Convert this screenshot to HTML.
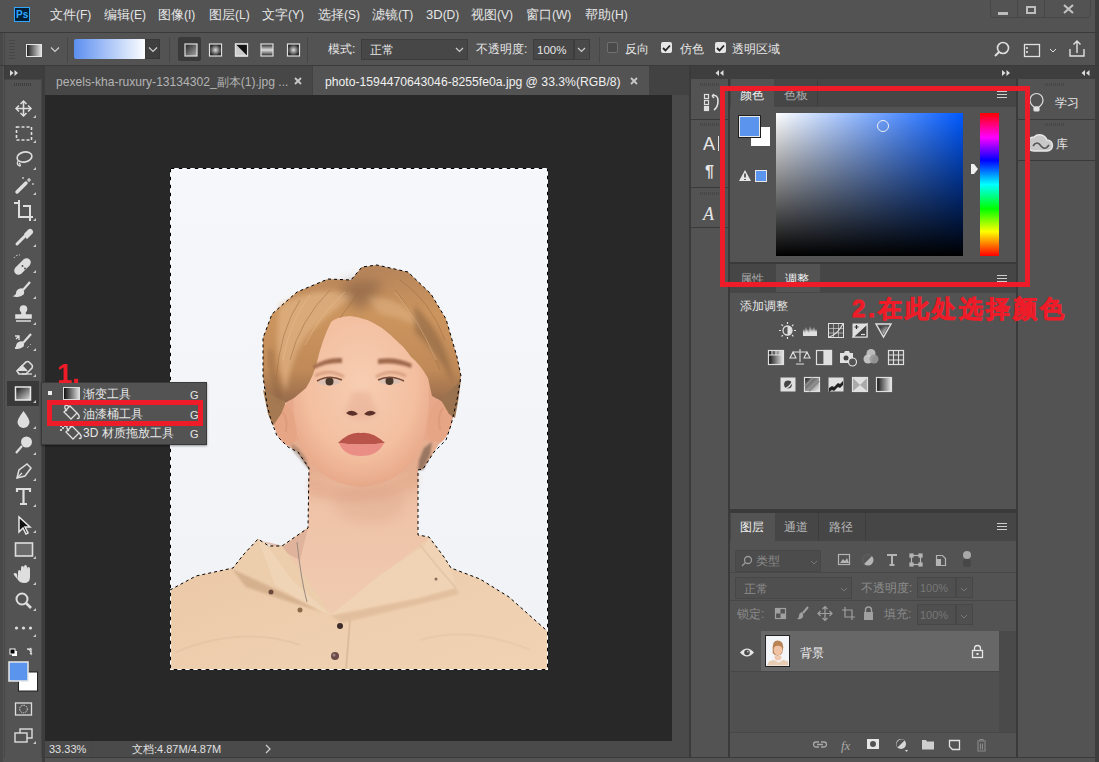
<!DOCTYPE html>
<html><head><meta charset="utf-8">
<style>
*{margin:0;padding:0;box-sizing:border-box}
html,body{width:1099px;height:762px;overflow:hidden;background:#535353;font-family:"Liberation Sans",sans-serif;color:#e6e6e6}
.a{position:absolute}
.t{position:absolute;white-space:nowrap;font-size:13px;line-height:16px}
.s{position:absolute;white-space:nowrap;font-size:12px;line-height:14px}
svg{position:absolute;overflow:visible}
</style></head><body>
<!-- ================= FRAME ================= -->
<div class="a" style="left:0;top:32px;width:3px;height:730px;background:#484848"></div><div class="a" style="left:4px;top:66px;width:1px;height:692px;background:#3a3a3a"></div>
<div class="a" style="left:1095px;top:0;width:4px;height:762px;background:#3d3d3d"></div>
<!-- menu bar -->
<div class="a" style="left:0;top:32px;width:1099px;height:1px;background:#3a3a3a"></div>
<div class="a" style="left:14px;top:7px;width:16px;height:15px;background:#001e36;border:1px solid #31a8ff"></div>
<div class="t" style="left:16px;top:7px;font-size:10px;line-height:15px;color:#31a8ff;font-weight:bold">Ps</div>
<div class="t" style="left:50px;top:7px">文件<span style="font-size:12px">(F)</span></div>
<div class="t" style="left:104px;top:7px">编辑<span style="font-size:12px">(E)</span></div>
<div class="t" style="left:158px;top:7px">图像<span style="font-size:12px">(I)</span></div>
<div class="t" style="left:209px;top:7px">图层<span style="font-size:12px">(L)</span></div>
<div class="t" style="left:262px;top:7px">文字<span style="font-size:12px">(Y)</span></div>
<div class="t" style="left:318px;top:7px">选择<span style="font-size:12px">(S)</span></div>
<div class="t" style="left:372px;top:7px">滤镜<span style="font-size:12px">(T)</span></div>
<div class="t" style="left:426px;top:7px">3D<span style="font-size:12px">(D)</span></div>
<div class="t" style="left:471px;top:7px">视图<span style="font-size:12px">(V)</span></div>
<div class="t" style="left:526px;top:7px">窗口<span style="font-size:12px">(W)</span></div>
<div class="t" style="left:585px;top:7px">帮助<span style="font-size:12px">(H)</span></div>
<!-- window buttons -->
<div class="a" style="left:990px;top:-1px;width:101px;height:19px;border:1px solid #474747;border-radius:0 0 4px 4px"></div>
<div class="a" style="left:1017px;top:0;width:1px;height:18px;background:#474747"></div>
<div class="a" style="left:1044px;top:0;width:1px;height:18px;background:#474747"></div>
<div class="a" style="left:998px;top:12px;width:10px;height:3px;background:#bdbdbd"></div>
<div class="a" style="left:1026px;top:6px;width:10px;height:8px;border:2px solid #bdbdbd"></div>
<svg style="left:1063px;top:4px" width="11" height="10" viewBox="0 0 11 10" stroke="#c4c4c4" stroke-width="2"><path d="M1,1 l9,8 M10,1 l-9,8"/></svg>

<!-- ================= OPTIONS BAR ================= -->
<div class="a" style="left:4px;top:33px;width:1091px;height:32px;border-left:1px solid #474747"></div>
<div class="a" style="left:0;top:65px;width:1099px;height:1px;background:#3a3a3a"></div>

<!-- ================= PANEL HEADER ROW ================= -->
<div class="a" style="left:5px;top:66px;width:38px;height:13px;background:#3e3e3e"></div><div class="a" style="left:691px;top:66px;width:404px;height:13px;background:#3e3e3e"></div>

<!-- ================= TOOLBAR ================= -->
<div class="a" style="left:4px;top:79px;width:38px;height:679px;background:#535353;border-left:1px solid #474747;border-right:1px solid #474747"></div>
<div class="a" style="left:42px;top:66px;width:3px;height:696px;background:#3d3d3d"></div>

<!-- ================= DOCUMENT ================= -->
<div class="a" style="left:45px;top:66px;width:644px;height:29px;background:#424242"></div>
<div class="a" style="left:45px;top:66px;width:267px;height:29px;background:#474747"></div>
<div class="a" style="left:313px;top:66px;width:336px;height:29px;background:#535353"></div>
<div class="a" style="left:45px;top:95px;width:627px;height:646px;background:#282828"></div>
<div class="a" style="left:672px;top:95px;width:17px;height:646px;background:#4a4a4a"></div>
<div class="a" style="left:45px;top:741px;width:644px;height:16px;background:#4a4a4a"></div>
<div class="a" style="left:45px;top:757px;width:1050px;height:1px;background:#3a3a3a"></div>
<div class="a" style="left:689px;top:66px;width:2px;height:692px;background:#3a3a3a"></div>

<!-- ================= MIDDLE ICON COLUMN ================= -->
<div class="a" style="left:728px;top:79px;width:2px;height:679px;background:#3a3a3a"></div>
<div class="a" style="left:691px;top:119px;width:37px;height:1px;background:#3a3a3a"></div>
<div class="a" style="left:691px;top:187px;width:37px;height:1px;background:#3a3a3a"></div>
<div class="a" style="left:691px;top:227px;width:37px;height:1px;background:#3a3a3a"></div>

<!-- ================= RIGHT PANELS ================= -->
<div class="a" style="left:1016px;top:79px;width:2px;height:679px;background:#3a3a3a"></div>
<div class="a" style="left:1018px;top:119px;width:77px;height:1px;background:#3a3a3a"></div>
<div class="a" style="left:1018px;top:160px;width:77px;height:1px;background:#3a3a3a"></div>

<!-- color panel -->
<div class="a" style="left:730px;top:79px;width:286px;height:28px;background:#464646"></div>
<div class="a" style="left:731px;top:79px;width:43px;height:28px;background:#535353"></div>
<div class="a" style="left:817px;top:79px;width:1px;height:28px;background:#3d3d3d"></div>
<div class="a" style="left:730px;top:262px;width:286px;height:2px;background:#3a3a3a"></div>
<!-- adjustments panel -->
<div class="a" style="left:730px;top:264px;width:286px;height:28px;background:#464646"></div>
<div class="a" style="left:776px;top:264px;width:44px;height:28px;background:#535353"></div>
<div class="a" style="left:730px;top:509px;width:286px;height:4px;background:#3a3a3a"></div>
<!-- layers panel -->
<div class="a" style="left:730px;top:513px;width:286px;height:28px;background:#464646"></div>
<div class="a" style="left:731px;top:513px;width:44px;height:28px;background:#535353"></div>
<div class="a" style="left:818px;top:513px;width:1px;height:28px;background:#3d3d3d"></div>
<div class="a" style="left:865px;top:513px;width:1px;height:28px;background:#3d3d3d"></div>
<div class="a" style="left:730px;top:572px;width:286px;height:1px;background:#474747"></div>
<div class="a" style="left:730px;top:600px;width:286px;height:1px;background:#474747"></div>
<div class="a" style="left:761px;top:631px;width:238px;height:40px;background:#676767"></div>
<div class="a" style="left:731px;top:671px;width:268px;height:61px;background:#505050;border-top:1px solid #474747"></div><div class="a" style="left:999px;top:631px;width:17px;height:101px;background:#4a4a4a"></div>
<div class="a" style="left:730px;top:732px;width:286px;height:1px;background:#474747"></div>

<!-- ================= PHOTO ================= -->
<svg style="left:170px;top:168px" width="378" height="502" viewBox="170 168 378 502">
<defs>
<linearGradient id="bgp" x1="0" y1="0" x2="0" y2="1"><stop offset="0" stop-color="#f6f7fa"/><stop offset="1" stop-color="#f0f2f6"/></linearGradient>
<linearGradient id="shirt" x1="0" y1="0" x2="1" y2="1"><stop offset="0" stop-color="#eac7a5"/><stop offset="0.6" stop-color="#eecfaf"/><stop offset="1" stop-color="#f1d3b4"/></linearGradient>
<linearGradient id="hair" x1="0" y1="0" x2="0" y2="1"><stop offset="0" stop-color="#b5845a"/><stop offset="0.35" stop-color="#cc955f"/><stop offset="0.75" stop-color="#c08a58"/><stop offset="1" stop-color="#93684a"/></linearGradient>
<radialGradient id="face" cx="0.5" cy="0.42" r="0.62"><stop offset="0" stop-color="#f7cdb2"/><stop offset="0.65" stop-color="#f3bfa0"/><stop offset="1" stop-color="#e6a585"/></radialGradient>
<linearGradient id="neck" x1="0" y1="0" x2="0" y2="1"><stop offset="0" stop-color="#e3aa8c"/><stop offset="0.3" stop-color="#efc3a8"/><stop offset="1" stop-color="#f0cbb0"/></linearGradient>
<filter id="bl" x="-30%" y="-30%" width="160%" height="160%"><feGaussianBlur stdDeviation="0.8"/></filter>
<filter id="bl2" x="-30%" y="-30%" width="160%" height="160%"><feGaussianBlur stdDeviation="2.5"/></filter><filter id="bl3" x="-50%" y="-50%" width="200%" height="200%"><feGaussianBlur stdDeviation="6"/></filter>
</defs>
<rect x="170" y="168" width="378" height="502" fill="url(#bgp)"/>
<!-- shirt -->
<path d="M170,590 L196,576 L233,568 L244,554 L258,539 L269,546 L282,546 L307,528 L331,560 L418,535 L429,537 L444,557 L451,568 L480,579 L509,597 L546,630 L548,632 L548,670 L170,670 Z" fill="url(#shirt)"/>
<!-- neck & chest skin -->
<path d="M309,462 L308,528 L284,546 L331,615 L429,538 L418,535 L418,462 Z" fill="url(#neck)"/>

<!-- collar back shadow -->
<path d="M262,541 L284,546 L308,528 L300,560 Z" fill="#dcae98" opacity="0.8"/>
<!-- collar flaps -->
<path d="M258,539 L269,546 L282,546 L300,570 L331,615 L322,612 L290,596 L252,580 L232,569 L244,554 Z" fill="#eccdac"/>
<path d="M258,539 L266,544 L292,580 L331,615 L318,610 L275,585 Z" fill="#f0d4b6"/>
<path d="M429,537 L444,557 L451,568 L456,588 L420,598 L331,615 L380,575 L425,545 Z" fill="#f0d3b4"/>
<path d="M232,569 L290,596 L322,612 L290,602 L246,587 Z" fill="#c49c78" opacity="0.55" filter="url(#bl)"/>
<path d="M331,616 L420,598 L456,588 L459,594 L420,604 L342,623 Z" fill="#d6b090" opacity="0.5" filter="url(#bl)"/>
<path d="M420,545 Q440,570 456,588" stroke="#e2c3a4" stroke-width="2" fill="none" opacity="0.8"/>
<line x1="350" y1="620" x2="346" y2="670" stroke="#ddbd9d" stroke-width="2"/>
<path d="M176,652 Q240,625 300,645" stroke="#e0c1a1" stroke-width="2" fill="none" opacity="0.6"/>
<path d="M420,640 Q470,625 530,650" stroke="#e4c6a7" stroke-width="2" fill="none" opacity="0.5"/>
<!-- buttons -->
<circle cx="340" cy="626" r="3" fill="#3e2c28"/>
<circle cx="335" cy="656" r="4" fill="#6b4c4a"/><circle cx="334" cy="655" r="1.5" fill="#a08080"/>
<circle cx="300" cy="610" r="2.5" fill="#8a6a4a"/>
<circle cx="271" cy="592" r="2.5" fill="#6a4a3a"/>
<circle cx="436" cy="579" r="1.5" fill="#8a6a5a"/>
<!-- necklace -->
<path d="M297,542 Q301,580 307,602" stroke="#9a8a80" stroke-width="1" fill="none"/>
<!-- ears -->
<rect x="286" y="370" width="152" height="74" fill="#e8a98a"/>
<ellipse cx="285" cy="424" rx="11" ry="22" transform="rotate(-14 285 424)" fill="#e6a585"/>
<ellipse cx="440" cy="421" rx="12" ry="24" transform="rotate(14 440 421)" fill="#e6a585"/>
<path d="M282,412 q6,4 4,20" stroke="#d89878" stroke-width="2" fill="none" opacity=".7"/>
<path d="M443,408 q-6,6 -3,22" stroke="#d89878" stroke-width="2" fill="none" opacity=".7"/>
<path d="M296,446 L309,462 L309,470 L300,456 Z" fill="#8a6a55" opacity=".7"/>
<path d="M286,445 L298,452 L309,468 L309,472 L418,472 L418,470 L423,469 L434,452 L440,442 L420,440 L300,440 Z" fill="#e5ae90"/>
<path d="M291,443 L298,448 L306,458 L309,470 L300,459 L293,451 Z" fill="#8a6a58" opacity=".5" filter="url(#bl)"/>
<!-- face -->
<path d="M293,308 L429,308 L429,400 Q428,436 415,458 Q395,485 361,487 Q327,485 307,458 Q294,436 293,400 Z" fill="url(#face)"/>
<path d="M309,478 Q362,500 418,472 L418,486 Q362,512 309,494 Z" fill="#e2a98b" opacity="0.5" filter="url(#bl2)"/><ellipse cx="370" cy="503" rx="36" ry="20" fill="#dba387" opacity="0.35" filter="url(#bl3)"/>
<path d="M424,448 L432,442 L430,455 L423,470 L418,470 L419,460 Z" fill="#7a6050" opacity=".7" filter="url(#bl)"/>
<!-- hair -->
<path d="M283,404 L267,405 L263,376 L263,338 L272,314 L297,292 L328,279 L351,280 L362,267 L377,265 L408,272 L431,294 L446,319 L457,357 L461,376 L457,400 L443,402 L432,396 L428,378 Q420,364 411,357 Q405,348 399,343 Q390,334 382,328 Q365,317 350,316 Q336,317 331,322 Q322,340 317,362 Q313,377 306,388 L294,398 Z" fill="url(#hair)"/>
<path d="M263,390 L286,402 L281,414 L273,426 L268,414 Z" fill="#a57a52"/>
<path d="M461,380 L441,400 L449,414 L455,418 L458,402 Z" fill="#9a7250"/>
<path d="M280,305 Q320,283 355,296 Q330,312 310,332 Q292,352 286,392 Q272,350 280,305 Z" fill="#e0b283" opacity="0.75" filter="url(#bl2)"/>
<path d="M365,296 Q405,296 425,330 Q405,318 380,314 Z" fill="#dcae7e" opacity="0.65" filter="url(#bl2)"/>
<path d="M340,286 Q362,274 384,284 Q374,298 358,312 Z" fill="#7a5740" opacity="0.5" filter="url(#bl3)"/>
<path d="M414,305 Q447,335 454,385 Q437,352 415,332 Z" fill="#86603f" opacity="0.55" filter="url(#bl2)"/>
<path d="M270,350 Q272,380 280,400" stroke="#86603f" stroke-width="5" fill="none" opacity="0.45" filter="url(#bl2)"/>
<g stroke="#9a6a44" stroke-width="1" fill="none" opacity="0.5">
<path d="M300,300 Q280,330 276,380"/><path d="M330,290 Q300,320 290,360"/><path d="M395,290 Q420,320 440,370"/><path d="M360,290 Q350,305 340,318"/><path d="M400,280 Q430,300 445,340"/>
</g>
<g stroke="#e8c092" stroke-width="1" fill="none" opacity="0.5">
<path d="M310,295 Q290,320 283,360"/><path d="M345,292 Q320,315 305,345"/><path d="M395,292 Q418,318 436,360"/>
</g>
<!-- brows -->
<path d="M313,366 Q326,357 342,358 L342,363 Q327,362 314,369 Z" fill="#a06b4e" filter="url(#bl)"/>
<path d="M378,359 Q396,356 412,364 L411,368 Q396,362 378,364 Z" fill="#a06b4e" filter="url(#bl)"/>
<!-- eyes -->
<path d="M315,376 Q329,368 344,377" stroke="#c98a6c" stroke-width="3" fill="none" opacity=".6" filter="url(#bl)"/>
<path d="M376,377 Q391,368 406,376" stroke="#c98a6c" stroke-width="3" fill="none" opacity=".6" filter="url(#bl)"/>
<ellipse cx="329" cy="382" rx="11" ry="3.5" fill="#dcc2b4"/>
<ellipse cx="390" cy="381" rx="11" ry="3.5" fill="#dcc2b4"/>
<circle cx="329.5" cy="381.5" r="4" fill="#4a372c"/>
<circle cx="389.5" cy="381" r="4" fill="#4a372c"/>
<path d="M317,381 Q329,374 342,380" stroke="#7a4a38" stroke-width="1.6" fill="none"/>
<path d="M378,380 Q390,374 404,381" stroke="#7a4a38" stroke-width="1.6" fill="none"/>
<!-- nose -->
<path d="M352,392 Q349,405 344,412 Q350,421 362,420 Q374,421 379,412 Q372,405 370,392" fill="#e7b096" opacity="0.55" filter="url(#bl2)"/>
<path d="M346,413 Q352,408 358,414 Q352,418 346,413z" fill="#5a3028"/>
<path d="M364,414 Q370,408 376,413 Q370,418 364,414z" fill="#5a3028"/>
<!-- lips -->
<path d="M338,443 Q350,431 361,433 Q372,431 385,443 Q362,446 338,443 Z" fill="#b9544a"/>
<path d="M339,443 Q362,446 384,443 Q378,456 361,456 Q344,456 339,443 Z" fill="#ea8e85"/>
<!-- marching ants -->
<rect x="170.5" y="168.5" width="377" height="501" fill="none" stroke="#000" stroke-width="1" stroke-dasharray="4 4"/>
<rect x="170.5" y="168.5" width="377" height="501" fill="none" stroke="#fff" stroke-width="1" stroke-dasharray="4 4" stroke-dashoffset="4"/>
<path d="M170,590 L196,576 L233,568 L244,554 L258,539 L269,546 L282,546 L308,528 L309,468 L298,452 L288,447 L277,436 L271,420 L267,405 L263,376 L263,338 L272,314 L297,292 L328,279 L351,280 L362,267 L377,265 L408,272 L431,294 L446,319 L457,357 L461,376 L457,400 L451,425 L446,440 L434,452 L423,469 L418,470 L418,535 L429,537 L444,557 L451,568 L480,579 L509,597 L546,630" fill="none" stroke="#000" stroke-width="1" stroke-dasharray="3 3"/>
</svg>

<!-- ================= TOOLBAR ICONS ================= -->
<svg style="left:10px;top:70px" width="10" height="6" viewBox="0 0 10 6" fill="#dcdcdc"><path d="M0,0 l3.5,3 l-3.5,3z M4.5,0 l3.5,3 l-3.5,3z"/></svg>
<div class="a" style="left:14px;top:83px;width:18px;height:3px;background:repeating-linear-gradient(90deg,#3e3e3e 0 1px,transparent 1px 2px)"></div>
<div class="a" style="left:7px;top:381px;width:32px;height:25px;background:#393939"></div>
<svg style="left:0;top:0" width="45" height="762" viewBox="0 0 45 762" fill="none" stroke="#dedede" stroke-width="1.6">
<g fill="#c8c8c8" stroke="none">
<path d="M33,118 l3,-3 v3z"/><path d="M33,143 l3,-3 v3z"/><path d="M33,170 l3,-3 v3z"/><path d="M33,195 l3,-3 v3z"/><path d="M33,221 l3,-3 v3z"/><path d="M33,247 l3,-3 v3z"/><path d="M33,273 l3,-3 v3z"/><path d="M33,299 l3,-3 v3z"/><path d="M33,325 l3,-3 v3z"/><path d="M33,351 l3,-3 v3z"/><path d="M33,377 l3,-3 v3z"/><path d="M33,403 l3,-3 v3z"/><path d="M33,429 l3,-3 v3z"/><path d="M33,455 l3,-3 v3z"/><path d="M33,481 l3,-3 v3z"/><path d="M33,507 l3,-3 v3z"/><path d="M33,533 l3,-3 v3z"/><path d="M33,559 l3,-3 v3z"/><path d="M33,585 l3,-3 v3z"/><path d="M33,611 l3,-3 v3z"/><path d="M33,637 l3,-3 v3z"/><path d="M33,744 l3,-3 v3z"/>
</g>
<!-- move -->
<path d="M23.5,101 v15 M16,108.5 h15"/><path d="M20.5,104 l3,-3 l3,3 M20.5,113 l3,3 l3,-3 M19,105.5 l-3,3 l3,3 M28,105.5 l3,3 l-3,3" stroke-width="1.5"/>
<!-- marquee -->
<rect x="16.5" y="127" width="15" height="13" stroke-dasharray="3 2"/>
<!-- lasso -->
<ellipse cx="24.5" cy="157" rx="7.5" ry="5" transform="rotate(-12 24.5 157)"/><path d="M18,161 q-2,4 2,5 q1,-1 -1,-3" stroke-width="1.3"/>
<!-- magic wand -->
<path d="M17,192 l9,-9" stroke-width="3.5" stroke-linecap="round"/><path d="M29,178 v4 M27,180 h4 M23,177 v2 M33,183 v2" stroke-width="1.2"/>
<!-- crop -->
<path d="M14,203 h5 v14 h14 M19,203 v-3 M23,206 h7 v15" stroke-width="2"/>
<!-- eyedropper -->
<path d="M17,244 l9,-9" stroke-width="3" stroke-linecap="round"/><path d="M25,234 l4,-4 q2,-1 3,1 q1,1 -1,3 l-4,4z" fill="#dedede"/>
<!-- healing -->
<path d="M16,268 l8,-8 q3,-2 5,0 q2,2 0,5 l-8,8 q-3,2 -5,0 q-2,-2 0,-5z" fill="#dedede"/><circle cx="22.5" cy="266" r="1" fill="#535353" stroke="none"/><circle cx="25" cy="268.5" r="1" fill="#535353" stroke="none"/><path d="M14,258 a6,6 0 0 1 6,-3" stroke-dasharray="1.5 1.5" stroke-width="1"/>
<!-- brush -->
<path d="M30,282 l-7,8" stroke-width="2.2"/><path d="M22,289 q-4,0 -5,3 q0,3 -2,4 q5,1 8,-2 q1,-3 -1,-5z" fill="#dedede"/>
<!-- stamp -->
<circle cx="23.5" cy="309" r="3" fill="#dedede"/><path d="M22,312 v3 h-6 v3 h15 v-3 h-6 v-3" fill="#dedede"/><path d="M16,321 h15" stroke-width="1.5"/>
<!-- history brush -->
<path d="M31,334 l-8,9" stroke-width="2.2"/><path d="M22,342 q-4,0 -5,3 q0,3 -2,3 q5,1 8,-2 q1,-2 -1,-4z" fill="#dedede"/><path d="M16,339 l3,-3 M15,336 h4 v4" stroke-width="1.3"/><path d="M27,348 l2,-2 M30,345 l1,-1" stroke-width="1" stroke-dasharray="1 1"/>
<!-- eraser -->
<path d="M17,371 l9,-9 q2,-1 3,0 l3,3 q1,1 0,3 l-6,6 h-7z" fill="none"/><path d="M17,371 l5,-5 l5,5" fill="#dedede"/><path d="M22,374 h10" stroke-width="1.3"/>
<!-- gradient selected -->
<defs><linearGradient id="tg" x1="0" y1="0" x2="1" y2="1"><stop offset="0" stop-color="#111"/><stop offset="1" stop-color="#ddd"/></linearGradient></defs>
<rect x="15.5" y="387" width="15" height="13" fill="url(#tg)" stroke="#e8e8e8" stroke-width="1.5"/>
<!-- blur drop -->
<path d="M23.5,411 q-6,8 -6,11 a6,6 0 0 0 12,0 q0,-3 -6,-11z" fill="#dedede" stroke="none"/>
<!-- dodge -->
<circle cx="26.5" cy="442" r="5.5" fill="#dedede" stroke="none"/><path d="M22,446 l-6,7" stroke-width="2.2"/>
<!-- pen -->
<path d="M17,478 l2,-8 l8,-6 l4,4 l-6,8z" fill="none" stroke-width="1.5"/><path d="M17,478 l5,-5" stroke-width="1.2"/>
<!-- type -->
<path d="M17,492 v-3 h13 v3 M23.5,489 v15 M20,504 h7" stroke-width="2.2"/>
<!-- path selection -->
<path d="M19,517 v15 l4,-4 l3,6 l2,-1 l-3,-6 h5z" fill="#111" stroke="#e8e8e8" stroke-width="1.5"/>
<!-- rectangle -->
<rect x="15.5" y="543" width="17" height="13" fill="#6a6a6a" stroke="#dedede" stroke-width="1.6"/>
<!-- hand -->
<path d="M18,580 v-8 q0,-2 1.5,-2 q1.5,0 1.5,2 v-4 q0,-2 1.5,-2 q1.5,0 1.5,2 v-1 q0,-2 1.5,-2 q1.5,0 1.5,2 v2 q0,-2 1.5,-2 q1.5,0 1.5,2 v8 q0,6 -6,6 q-4,0 -6,-3 l-4,-5 q-1,-2 1,-2 q1,0 2,1z" fill="#dedede" stroke="none"/>
<!-- zoom -->
<circle cx="22" cy="599" r="5.5" stroke-width="2"/><path d="M26,603 l5,5" stroke-width="2.6"/>
<!-- more -->
<g fill="#dedede" stroke="none"><circle cx="16.5" cy="628" r="1.6"/><circle cx="23.5" cy="628" r="1.6"/><circle cx="30.5" cy="628" r="1.6"/></g>
<!-- small fg/bg -->
<rect x="12" y="651" width="5" height="5" fill="#fff" stroke="none"/><rect x="10" y="649" width="5" height="5" fill="#000" stroke="#fff" stroke-width="1"/>
<path d="M27,649 h4 l-1,-1 M31,649 v5 l-1,-1 l1,1 l1,-1" stroke-width="1.2"/><path d="M27,649 q3,0 4,3" stroke-width="1.2"/>
<!-- fg/bg big -->
<rect x="18.5" y="672" width="19" height="19" fill="#fff" stroke="#222" stroke-width="1"/>
<rect x="9" y="662" width="19" height="19" fill="#5b94ec" stroke="#e8e8e8" stroke-width="1.5"/>
<!-- quick mask -->
<rect x="15.5" y="703" width="16" height="12" stroke-width="1.3"/><circle cx="23.5" cy="709" r="3.8" stroke-dasharray="1.5 1" stroke-width="1"/>
<!-- screen mode -->
<rect x="20" y="729" width="12" height="9" stroke-width="1.4"/><rect x="15" y="733" width="12" height="9" fill="#535353" stroke-width="1.4"/>
</svg>
<!-- flyout menu -->
<div class="a" style="left:41px;top:382px;width:166px;height:63px;background:#535353;border:1px solid #3a3a3a;box-shadow:0 1px 2px rgba(0,0,0,.4)"></div>
<div class="a" style="left:48px;top:391px;width:4px;height:4px;background:#eee"></div>
<div class="a" style="left:63px;top:387px;width:17px;height:13px;background:linear-gradient(90deg,#111,#ddd);border:1px solid #ddd"></div>
<div class="s" style="left:83px;top:387px;font-size:12px">渐变工具</div>
<div class="s" style="left:190px;top:388px;font-size:11px">G</div>
<svg style="left:60px;top:403px" width="22" height="18" viewBox="0 0 22 18" fill="none" stroke="#e0e0e0" stroke-width="1.3"><path d="M4,9 l6,-6 l7,7 l-6,6z"/><path d="M9,4 q-2,-3 -4,-1 q-1,2 2,5"/><path d="M17,10 q3,3 2,5 q-1,1 -2,0"/></svg>
<div class="s" style="left:83px;top:407px;font-size:12px">油漆桶工具</div>
<div class="s" style="left:190px;top:408px;font-size:11px">G</div>
<svg style="left:60px;top:423px" width="24" height="18" viewBox="0 0 24 18" fill="none" stroke="#e0e0e0" stroke-width="1.3"><path d="M6,9 l6,-6 l7,7 l-6,6z"/><path d="M11,4 q-2,-3 -4,-1 q-1,2 2,5"/><path d="M19,10 q3,3 2,5 q-1,1 -2,0"/><g fill="#ccc" stroke="none"><rect x="0" y="2" width="2" height="2"/><rect x="2" y="4" width="2" height="2"/><rect x="4" y="2" width="2" height="2"/><rect x="0" y="6" width="2" height="2"/></g></svg>
<div class="s" style="left:83px;top:426px;font-size:12px">3D 材质拖放工具</div>
<div class="s" style="left:190px;top:427px;font-size:11px">G</div>
<div class="a" style="left:57px;top:359px;font-size:27px;line-height:30px;font-weight:bold;color:#ee1c28;font-family:'Liberation Sans',sans-serif">1.</div>

<!-- ================= OPTIONS CONTENT ================= -->
<div class="a" style="left:9px;top:40px;width:6px;height:20px;background:repeating-linear-gradient(180deg,#474747 0 1px,transparent 1px 3px)"></div>
<div class="a" style="left:26px;top:44px;width:16px;height:13px;background:linear-gradient(90deg,#222,#e0e0e0);border:1px solid #e6e6e6"></div>
<svg style="left:50px;top:46px" width="10" height="7" viewBox="0 0 10 7" fill="none" stroke="#cfcfcf" stroke-width="1.2"><path d="M1,1.5 l4,4 l4,-4"/></svg>
<div class="a" style="left:67px;top:37px;width:1px;height:26px;background:#474747"></div>
<div class="a" style="left:74px;top:39px;width:72px;height:20px;background:linear-gradient(90deg,#5c8ff0,#ffffff);border-radius:2px"></div>
<div class="a" style="left:145px;top:39px;width:15px;height:20px;background:#3f3f3f;border:1px solid #383838"></div>
<svg style="left:148px;top:46px" width="10" height="7" viewBox="0 0 10 7" fill="none" stroke="#cfcfcf" stroke-width="1.2"><path d="M1,1.5 l4,4 l4,-4"/></svg>
<div class="a" style="left:169px;top:37px;width:1px;height:26px;background:#474747"></div>
<div class="a" style="left:178px;top:37px;width:23px;height:24px;background:#3a3a3a;border-radius:2px"></div>
<svg style="left:0;top:0" width="320" height="66" viewBox="0 0 320 66" fill="none" stroke="#e0e0e0" stroke-width="1.2">
<defs>
<linearGradient id="og1" x1="0" y1="0" x2="1" y2="1"><stop offset="0" stop-color="#222"/><stop offset="1" stop-color="#aaa"/></linearGradient>
<radialGradient id="og2"><stop offset="0" stop-color="#ddd"/><stop offset="1" stop-color="#222"/></radialGradient>
<linearGradient id="og3" x1="0" y1="0" x2="0" y2="1"><stop offset="0" stop-color="#222"/><stop offset="0.5" stop-color="#ddd"/><stop offset="1" stop-color="#222"/></linearGradient>
</defs>
<rect x="185" y="44" width="12" height="12" fill="url(#og1)"/>
<rect x="209.5" y="44" width="12" height="12" fill="url(#og2)"/>
<rect x="235.5" y="44" width="12" height="12" fill="#ccc"/><path d="M236,44.5 l11,11 v-11z" fill="#111" stroke="none"/><rect x="235.5" y="44" width="12" height="12"/>
<rect x="261" y="44" width="12" height="12" fill="url(#og3)"/>
<rect x="287.5" y="44" width="12" height="12" fill="url(#og2)"/>
</svg>
<div class="a" style="left:307px;top:37px;width:1px;height:26px;background:#474747"></div>
<div class="t" style="left:328px;top:41px;font-size:12px">模式:</div>
<div class="a" style="left:361px;top:39px;width:107px;height:21px;background:#474747;border:1px solid #3d3d3d"></div>
<div class="t" style="left:370px;top:42px;font-size:12px">正常</div>
<svg style="left:455px;top:47px" width="9" height="6" viewBox="0 0 9 6" fill="none" stroke="#cfcfcf" stroke-width="1.2"><path d="M1,1 l3.5,3.5 l3.5,-3.5"/></svg>
<div class="t" style="left:476px;top:41px;font-size:12px">不透明度:</div>
<div class="a" style="left:533px;top:39px;width:41px;height:21px;background:#474747;border:1px solid #3d3d3d"></div>
<div class="t" style="left:537px;top:42px;font-size:11.5px">100%</div>
<div class="a" style="left:574px;top:39px;width:16px;height:21px;background:#4a4a4a;border:1px solid #3d3d3d"></div>
<svg style="left:577px;top:47px" width="9" height="6" viewBox="0 0 9 6" fill="none" stroke="#cfcfcf" stroke-width="1.2"><path d="M1,1 l3.5,3.5 l3.5,-3.5"/></svg>
<div class="a" style="left:599px;top:37px;width:1px;height:26px;background:#474747"></div>
<div class="a" style="left:607px;top:42px;width:11px;height:11px;border:1px solid #707070;border-radius:2px;background:#4a4a4a"></div>
<div class="t" style="left:625px;top:41px;font-size:12px">反向</div>
<div class="a" style="left:661px;top:42px;width:11px;height:11px;border-radius:2px;background:#e6e6e6"></div>
<svg style="left:662px;top:44px" width="9" height="8" viewBox="0 0 9 8" fill="none" stroke="#222" stroke-width="1.8"><path d="M1,4 l2.5,2.5 l4.5,-5"/></svg>
<div class="t" style="left:680px;top:41px;font-size:12px">仿色</div>
<div class="a" style="left:715px;top:42px;width:11px;height:11px;border-radius:2px;background:#e6e6e6"></div>
<svg style="left:716px;top:44px" width="9" height="8" viewBox="0 0 9 8" fill="none" stroke="#222" stroke-width="1.8"><path d="M1,4 l2.5,2.5 l4.5,-5"/></svg>
<div class="t" style="left:732px;top:41px;font-size:12px">透明区域</div>
<svg style="left:990px;top:38px" width="100" height="24" viewBox="990 38 100 24" fill="none" stroke="#e0e0e0" stroke-width="1.6">
<circle cx="1003" cy="48" r="5.5"/><path d="M999,52 l-4,4" stroke-width="2"/>
<rect x="1024.5" y="44.5" width="15" height="12" stroke-width="1.3"/><path d="M1027,47 v2 M1027,51 v2" stroke-width="1.6"/>
<path d="M1050,49 l3,3 l3,-3" stroke-width="1"/>
<path d="M1070,49 v7 h14 v-7 M1077,53 v-12 M1073.5,44.5 l3.5,-3.5 l3.5,3.5" stroke-width="1.4"/>
</svg>
<!-- header row markers -->
<div class="a" style="left:4px;top:79px;width:38px;height:1px;background:#474747"></div>
<svg style="left:715px;top:70px" width="10" height="6" viewBox="0 0 10 6" fill="#dcdcdc"><path d="M4,0 l-3.5,3 l3.5,3z M8.5,0 l-3.5,3 l3.5,3z"/></svg>
<svg style="left:1002px;top:70px" width="10" height="6" viewBox="0 0 10 6" fill="#dcdcdc"><path d="M0,0 l3.5,3 l-3.5,3z M4.5,0 l3.5,3 l-3.5,3z"/></svg>
<svg style="left:1081px;top:70px" width="10" height="6" viewBox="0 0 10 6" fill="#dcdcdc"><path d="M4,0 l-3.5,3 l3.5,3z M8.5,0 l-3.5,3 l3.5,3z"/></svg>

<!-- ================= TABS / STATUS ================= -->
<div class="t" style="left:56px;top:74px;font-size:12.1px;color:#b4b4b4">pexels-kha-ruxury-13134302_副本(1).jpg ...</div>
<svg style="left:294px;top:77px" width="8" height="8" viewBox="0 0 8 8" stroke="#c8c8c8" stroke-width="1.8"><path d="M1,1 l6,6 M7,1 l-6,6"/></svg>
<div class="t" style="left:325px;top:74px;font-size:12.2px;color:#f0f0f0">photo-1594470643046-8255fe0a.jpg @ 33.3%(RGB/8)</div>
<svg style="left:630px;top:77px" width="8" height="8" viewBox="0 0 8 8" stroke="#c8c8c8" stroke-width="1.8"><path d="M1,1 l6,6 M7,1 l-6,6"/></svg>
<div class="a" style="left:91px;top:741px;width:1px;height:16px;background:#474747"></div>
<div class="t" style="left:49px;top:742px;font-size:11px;line-height:14px;color:#e0e0e0">33.33%</div>
<div class="t" style="left:132px;top:742px;font-size:11px;line-height:14px;color:#e0e0e0">文档:4.87M/4.87M</div>
<svg style="left:265px;top:744px" width="6" height="10" viewBox="0 0 6 10" fill="none" stroke="#d0d0d0" stroke-width="1.2"><path d="M1,1 l4,4 l-4,4"/></svg>

<!-- ================= MIDDLE COLUMN ICONS ================= -->
<div class="a" style="left:700px;top:83px;width:20px;height:3px;background:repeating-linear-gradient(90deg,#474747 0 1px,transparent 1px 2px)"></div>
<div class="a" style="left:700px;top:123px;width:20px;height:3px;background:repeating-linear-gradient(90deg,#474747 0 1px,transparent 1px 2px)"></div>
<div class="a" style="left:700px;top:192px;width:20px;height:3px;background:repeating-linear-gradient(90deg,#474747 0 1px,transparent 1px 2px)"></div>
<svg style="left:690px;top:80px" width="40" height="150" viewBox="690 80 40 150" fill="none" stroke="#e0e0e0" stroke-width="1.2">
<rect x="704.5" y="94.5" width="4" height="4"/><rect x="704.5" y="100.5" width="4" height="4"/><rect x="704.5" y="106.5" width="4" height="4" fill="#e0e0e0"/>
<path d="M712,96 q6,-2 6,5 q0,6 -4,9" stroke-width="1.6"/><path d="M712,96 l2,-2 M712,96 l2,2" stroke-width="1.2"/>
<text x="703" y="150" font-family="Liberation Sans" font-size="18" fill="#e6e6e6" stroke="none">A</text>
<path d="M718.5,136 v15" stroke-width="1"/>
<text x="705" y="177" font-family="Liberation Sans" font-size="16" fill="#e6e6e6" stroke="none" font-weight="bold">¶</text>
<text x="703" y="220" font-family="Liberation Serif" font-size="18" font-style="italic" fill="#e6e6e6" stroke="none">A</text>
</svg>
<!-- ================= RIGHT COLUMN ================= -->
<div class="a" style="left:1045px;top:83px;width:20px;height:3px;background:repeating-linear-gradient(90deg,#474747 0 1px,transparent 1px 2px)"></div>
<div class="a" style="left:1045px;top:123px;width:20px;height:3px;background:repeating-linear-gradient(90deg,#474747 0 1px,transparent 1px 2px)"></div>
<svg style="left:1025px;top:90px" width="30" height="65" viewBox="1025 90 30 65" fill="none" stroke="#e0e0e0" stroke-width="1.2">
<path d="M1034,107 q-4,-3 -4,-7 a6.5,6.5 0 0 1 13,0 q0,4 -4,7z"/><rect x="1034" y="107" width="5" height="4" rx="1" fill="#e0e0e0"/>
<path d="M1034,151 a7,7 0 0 1 0,-14 a8,8 0 0 1 13,3 a5.5,5.5 0 0 1 0,11z" fill="#c8c8c8" stroke="#e8e8e8" stroke-width="1.4"/><path d="M1033,146 q4,-6 8,0 q4,5 8,-1" stroke="#555" stroke-width="1.6"/>
</svg>
<div class="t" style="left:1055px;top:95px;font-size:12px">学习</div>
<div class="t" style="left:1056px;top:136px;font-size:12px">库</div>

<!-- ================= COLOR PANEL CONTENT ================= -->
<div class="s" style="left:740px;top:88px;color:#f0f0f0">颜色</div>
<div class="s" style="left:784px;top:88px;color:#aaaaaa">色板</div>
<svg style="left:996px;top:90px" width="14" height="8" viewBox="0 0 14 8" stroke="#cfcfcf" stroke-width="1"><path d="M1,1.5 h10 M1,4.5 h10 M1,7.5 h10"/></svg>
<div class="a" style="left:751px;top:127px;width:19px;height:19px;background:#fff"></div>
<div class="a" style="left:739px;top:116px;width:21px;height:21px;background:#5b94ec;border:1.5px solid #e8e8e8;outline:1px solid #1e1e1e"></div>
<svg style="left:738px;top:169px" width="14" height="13" viewBox="0 0 14 13"><path d="M7,1 L13,12 H1 Z" fill="#e6e6e6"/><path d="M7,4.5 v4 M7,10 v1" stroke="#333" stroke-width="1.5"/></svg>
<div class="a" style="left:755px;top:170px;width:12px;height:12px;background:#5b94ec;border:1px solid #e6e6e6"></div>
<div class="a" style="left:776px;top:113px;width:187px;height:143px;background:linear-gradient(to bottom,rgba(0,0,0,0),#000),linear-gradient(to right,#fff,#0059ff)"></div>
<div class="a" style="left:877px;top:120px;width:12px;height:12px;border:1.2px solid #f0f0f0;border-radius:50%"></div>
<div class="a" style="left:980px;top:113px;width:19px;height:143px;background:linear-gradient(to bottom,#ff0000 0%,#ff00ff 17%,#0000ff 33%,#00ffff 50%,#00ff00 67%,#ffff00 83%,#ff0000 100%)"></div>
<svg style="left:969px;top:163px" width="10" height="12" viewBox="0 0 10 12"><path d="M2,1 h3 l4,5 l-4,5 h-3z" fill="#f0f0f0"/></svg>

<!-- ================= ADJUSTMENTS CONTENT ================= -->
<div class="s" style="left:740px;top:272px;color:#aaaaaa">属性</div>
<div class="s" style="left:785px;top:272px;color:#f0f0f0">调整</div>
<svg style="left:996px;top:274px" width="14" height="8" viewBox="0 0 14 8" stroke="#cfcfcf" stroke-width="1"><path d="M1,1.5 h10 M1,4.5 h10 M1,7.5 h10"/></svg>
<div class="a" style="left:730px;top:292px;width:286px;height:1px;background:#474747"></div>
<div class="s" style="left:740px;top:299px;font-size:12px;color:#e6e6e6">添加调整</div>
<svg style="left:765px;top:318px" width="150" height="80" viewBox="765 318 150 80" fill="none" stroke="#e0e0e0" stroke-width="1.2">
<defs><linearGradient id="ag" x1="0" y1="0" x2="1" y2="1"><stop offset="0" stop-color="#222"/><stop offset="1" stop-color="#eee"/></linearGradient>
<linearGradient id="ag2" x1="0" y1="0" x2="1" y2="0"><stop offset="0" stop-color="#111"/><stop offset="1" stop-color="#eee"/></linearGradient></defs>
<!-- row1 -->
<circle cx="787.5" cy="330.5" r="4.5" stroke-width="1.3"/><path d="M787.5,326 a4.5,4.5 0 0 1 0,9z" fill="#e0e0e0" stroke="none"/><path d="M787.5,322 v2 M787.5,337 v2 M779,330.5 h2 M794,330.5 h2 M781.5,324.5 l1.4,1.4 M792,335 l1.4,1.4 M781.5,336.5 l1.4,-1.4 M792,326 l1.4,-1.4"/>
<path d="M803,336 v-4 l1,-3 l1,4 l1,-6 l1,5 l1,-3 l1,4 l1,-7 l1,6 l1,-4 l1,4 l1,-5 l1,5 l1,-3 l1,3 v4z" fill="#e0e0e0" stroke="none"/>
<rect x="828.5" y="323.5" width="15" height="14" stroke-width="1"/><path d="M833.5,323.5 v14 M838.5,323.5 v14 M828.5,328.5 h15 M828.5,333 h15" stroke-width="0.6"/><path d="M829,337 q8,-2 14,-13" stroke-width="1.2"/>
<rect x="852.5" y="323.5" width="15" height="14" fill="#e0e0e0" stroke="none"/><path d="M853,337 l14,-13 v13z" fill="#444"/><path d="M854.5,327 h4 M856.5,325 v4" stroke="#333" stroke-width="1.2"/><path d="M861,334.5 h4" stroke="#e0e0e0" stroke-width="1.2"/>
<path d="M876,324 h15 l-7.5,13z" stroke-width="1.4"/><path d="M879,326.5 h9 l-4.5,8z" fill="url(#ag)" stroke="none"/>
<!-- row2 -->
<rect x="768.5" y="350.5" width="15" height="14" fill="url(#ag2)"/><path d="M768.5,355 h15 M772,350.5 v4.5 M776,350.5 v4.5 M780,350.5 v4.5" stroke-width="1"/>
<path d="M800,349 v13 M793,352 h14 M793,352 l-3,6 h6z M807,352 l-3,6 h6z M796,364 h8" stroke-width="1.1"/>
<rect x="816.5" y="350.5" width="15" height="14"/><rect x="824" y="350.5" width="7.5" height="14" fill="#e0e0e0"/>
<path d="M840,353 h4 l1,-2 h4 l1,2 h3 v10 h-13z" fill="#e0e0e0" stroke="none"/><circle cx="846" cy="358" r="2.5" fill="#444" stroke="none"/><circle cx="852.5" cy="362" r="4" fill="#535353" stroke-width="1.2"/>
<circle cx="871" cy="353.5" r="4.5" fill="#bbb" stroke="none"/><circle cx="868" cy="359" r="4.5" fill="#ccc" stroke="none" opacity=".9"/><circle cx="874" cy="359" r="4.5" fill="#999" stroke="none" opacity=".9"/>
<rect x="888.5" y="350.5" width="15" height="14"/><path d="M888.5,355 h15 M888.5,360 h15 M893.5,350.5 v14 M898.5,350.5 v14" stroke-width="1.1"/>
<!-- row3 -->
<rect x="780.5" y="377.5" width="15" height="14" fill="#e0e0e0" stroke="none"/><circle cx="788" cy="384.5" r="4.5" fill="#444"/><path d="M782,390 q8,-2 12,-11" stroke="#e0e0e0" stroke-width="1.5"/>
<rect x="804.5" y="377.5" width="15" height="14" fill="url(#ag)"/><path d="M805,386 l8,-8 M809,391 l10,-10" stroke="#888" stroke-width="2"/>
<rect x="828.5" y="377.5" width="15" height="14" fill="#e0e0e0" stroke="none"/><path d="M829,388 l3,-2 l2,1 l4,-4 l2,1 l3,-3 v4 l-3,3 l-2,-1 l-4,4 l-2,-1 l-3,2z" fill="#222" stroke="none"/>
<rect x="852.5" y="377.5" width="15" height="14" fill="#aaa"/><path d="M853,378 l7,7 l7,-7z M853,391 l7,-6 l7,6z" fill="#e0e0e0" stroke="none"/>
<rect x="876.5" y="377.5" width="15" height="14" fill="url(#ag2)"/>
</svg>

<!-- ================= LAYERS CONTENT ================= -->
<div class="s" style="left:740px;top:520px;color:#f0f0f0">图层</div>
<div class="s" style="left:784px;top:520px;color:#b8b8b8">通道</div>
<div class="s" style="left:829px;top:520px;color:#b8b8b8">路径</div>
<svg style="left:996px;top:522px" width="14" height="8" viewBox="0 0 14 8" stroke="#cfcfcf" stroke-width="1"><path d="M1,1.5 h10 M1,4.5 h10 M1,7.5 h10"/></svg>
<div class="a" style="left:735px;top:550px;width:86px;height:22px;background:#4c4c4c;border:1px solid #474747;border-radius:2px"></div>
<svg style="left:740px;top:554px" width="14" height="14" viewBox="0 0 14 14" fill="none" stroke="#9a9a9a" stroke-width="1.3"><circle cx="8" cy="6" r="3.5"/><path d="M5.5,8.5 l-3.5,3.5"/></svg>
<div class="s" style="left:756px;top:554px;color:#8c8c8c">类型</div>
<svg style="left:810px;top:560px" width="8" height="5" viewBox="0 0 8 5" fill="none" stroke="#777" stroke-width="1"><path d="M1,1 l3,3 l3,-3"/></svg>
<svg style="left:835px;top:550px" width="140" height="22" viewBox="835 550 140 22" fill="none" stroke="#b4b4b4" stroke-width="1.2">
<rect x="838.5" y="554.5" width="11" height="10"/><path d="M840,563 l3,-4 l2,2 l2,-3 l2,5z" fill="#b4b4b4" stroke="none"/>
<circle cx="868" cy="560" r="5.5" fill="#b4b4b4" stroke="none"/><path d="M864,564 a5.5,5.5 0 0 1 8,-8z" fill="#555" stroke="none"/>
<path d="M887,555 h10 M892,555 v10 M889.5,565 h5" stroke-width="2"/>
<rect x="911.5" y="555.5" width="9" height="9"/><rect x="910" y="554" width="3" height="3" fill="#b4b4b4"/><rect x="919" y="554" width="3" height="3" fill="#b4b4b4"/><rect x="910" y="563" width="3" height="3" fill="#b4b4b4"/><rect x="919" y="563" width="3" height="3" fill="#b4b4b4"/>
<path d="M936.5,555.5 h6 l3,3 v7 h-9z"/><rect x="936" y="559" width="5" height="7" fill="#b4b4b4" stroke="none"/>
<circle cx="967" cy="555" r="4" fill="#a8a8a8" stroke="none"/><rect x="963" y="559" width="8" height="8" rx="3" fill="#474747" stroke="none"/>
</svg>
<div class="a" style="left:735px;top:577px;width:117px;height:22px;background:#4f4f4f;border:1px solid #474747"></div>
<div class="s" style="left:744px;top:582px;color:#8c8c8c">正常</div>
<svg style="left:840px;top:587px" width="8" height="5" viewBox="0 0 8 5" fill="none" stroke="#777" stroke-width="1"><path d="M1,1 l3,3 l3,-3"/></svg>
<div class="s" style="left:861px;top:581px;color:#8c8c8c">不透明度:</div>
<div class="a" style="left:917px;top:577px;width:39px;height:21px;background:#4f4f4f;border:1px solid #474747"></div>
<div class="s" style="left:920px;top:581px;color:#777;font-size:11px">100%</div>
<div class="a" style="left:956px;top:577px;width:17px;height:21px;background:#4f4f4f;border:1px solid #474747"></div>
<svg style="left:960px;top:587px" width="8" height="5" viewBox="0 0 8 5" fill="none" stroke="#777" stroke-width="1"><path d="M1,1 l3,3 l3,-3"/></svg>
<div class="s" style="left:737px;top:607px;color:#8c8c8c">锁定:</div>
<svg style="left:770px;top:603px" width="110" height="22" viewBox="770 603 110 22" fill="none" stroke="#a0a0a0" stroke-width="1.2">
<rect x="775.5" y="608.5" width="10" height="10"/><rect x="776" y="609" width="4.5" height="4.5" fill="#a0a0a0" stroke="none"/><rect x="780.5" y="613.5" width="4.5" height="4.5" fill="#a0a0a0" stroke="none"/>
<path d="M808,607 l-5,6" stroke-width="2"/><path d="M802,612 q-3,1 -3,4 q0,2 -2,3 q4,1 6,-2 q1,-3 -1,-5z" fill="#a0a0a0" stroke="none"/>
<path d="M825,607 v13 M818.5,613.5 h13 M822.5,609 l2.5,-2.5 l2.5,2.5 M822.5,618 l2.5,2.5 l2.5,-2.5 M820.5,611 l-2.5,2.5 l2.5,2.5 M829.5,611 l2.5,2.5 l-2.5,2.5"/>
<path d="M842,610 h10 v10 M845,607 v10 h10" stroke-width="1.2"/>
<rect x="864" y="612" width="9" height="8" fill="#a0a0a0" stroke="none"/><path d="M865.5,612 v-2 a3,3 0 0 1 6,0 v2" stroke-width="1.4"/>
</svg>
<div class="s" style="left:884px;top:607px;color:#8c8c8c">填充:</div>
<div class="a" style="left:917px;top:604px;width:39px;height:21px;background:#4f4f4f;border:1px solid #474747"></div>
<div class="s" style="left:920px;top:608px;color:#777;font-size:11px">100%</div>
<div class="a" style="left:956px;top:604px;width:17px;height:21px;background:#4f4f4f;border:1px solid #474747"></div>
<svg style="left:960px;top:614px" width="8" height="5" viewBox="0 0 8 5" fill="none" stroke="#777" stroke-width="1"><path d="M1,1 l3,3 l3,-3"/></svg>
<svg style="left:739px;top:647px" width="16" height="11" viewBox="0 0 16 11"><path d="M1,5.5 q7,-8 14,0 q-7,8 -14,0z" fill="#e6e6e6"/><circle cx="8" cy="5.5" r="2.8" fill="#4a4a4a"/><circle cx="8.8" cy="4.6" r="0.9" fill="#bbb"/></svg>
<div class="a" style="left:765px;top:635px;width:25px;height:32px;background:#f4f5f9;border:1px solid #222"></div>
<svg style="left:766px;top:637px" width="23" height="29" viewBox="0 0 24 29"><path d="M7,10 q0,-7 5,-7 q6,0 6,7 l-1,6 q-2,3 -5,3 q-3,0 -5,-3z" fill="#b98455"/><ellipse cx="12.5" cy="13" rx="4.5" ry="5.5" fill="#f0c2a6"/><path d="M8,9 q4,-3 9,0" stroke="#b98455" stroke-width="2" fill="none"/><path d="M9,19 h7 v3 l-2,2 h-3 l-2,-2z" fill="#f0c8b0"/><path d="M1,29 l2,-4 l5,-2 l5,3 l5,-3 l5,2 v4z" fill="#e8cdb2"/></svg>
<div class="s" style="left:800px;top:646px;font-size:12px;color:#f0f0f0">背景</div>
<svg style="left:971px;top:644px" width="13" height="14" viewBox="0 0 13 14" fill="none" stroke="#e6e6e6" stroke-width="1.3"><rect x="1.5" y="6.5" width="10" height="7"/><path d="M3.5,6.5 v-2 a3,3 0 0 1 6,0 v2"/><rect x="5.5" y="9" width="2" height="2" fill="#e6e6e6" stroke="none"/></svg>
<svg style="left:810px;top:735px" width="180" height="20" viewBox="810 735 180 20" fill="none" stroke="#a8a8a8" stroke-width="1.3">
<path d="M819,742 h-3 a2.5,2.5 0 0 0 0,5 h3 M821,742 h3 a2.5,2.5 0 0 1 0,5 h-3 M817,744.5 h6"/>
<text x="841" y="750" font-family="Liberation Serif" font-style="italic" font-size="13" fill="#a8a8a8" stroke="none">fx</text>
<rect x="867" y="739" width="12" height="10" fill="#e6e6e6" stroke="none"/><circle cx="873" cy="744" r="3" fill="#535353" stroke="none"/>
<circle cx="901" cy="744" r="5" fill="#d8d8d8" stroke="none"/><path d="M897.5,747.5 a5,5 0 0 1 7,-7z" fill="#535353" stroke="none"/><path d="M905,750 l1.5,2 l1.5,-2z" fill="#ddd" stroke="none"/>
<path d="M922,740 h4 l1,1.5 h7 v8 h-12z" fill="#cfcfcf" stroke="none"/>
<path d="M949.5,740.5 h10 v9 h-7 l-3,-3z" stroke="#e0e0e0"/>
<path d="M977,741 h9 M980,741 v-1.5 h3 v1.5 M978,742 v9 h7 v-9 M980.5,743.5 v6 M982.5,743.5 v6" stroke="#8a8a8a" stroke-width="1.1"/>
</svg>
<!-- annotation 2 -->
<div class="a" style="left:852px;top:293px;font-size:24px;line-height:32px;font-weight:bold;color:#ee1c28;letter-spacing:3px;-webkit-text-stroke:0.9px #ee1c28">2.在此处选择颜色</div>

<!-- red boxes -->
<div class="a" style="left:720px;top:86px;width:310px;height:201px;border:5px solid #ee1c28"></div>
<div class="a" style="left:47px;top:400px;width:156px;height:26px;border:5px solid #ee1c28"></div>
</body></html>
